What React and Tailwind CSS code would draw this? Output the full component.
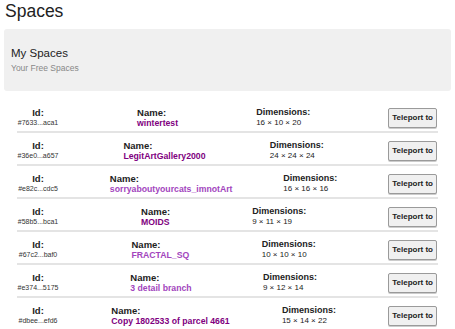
import React from "react";

const rows = [
  { id: "#7633...aca1", name: "wintertest", dims: "16 × 10 × 20", light: false },
  { id: "#36e0...a657", name: "LegitArtGallery2000", dims: "24 × 24 × 24", light: false },
  { id: "#e82c...cdc5", name: "sorryaboutyourcats_imnotArt", dims: "16 × 16 × 16", light: true },
  { id: "#58b5...bca1", name: "MOIDS", dims: "9 × 11 × 19", light: false },
  { id: "#67c2...baf0", name: "FRACTAL_SQ", dims: "10 × 10 × 10", light: true },
  { id: "#e374...5175", name: "3 detail branch", dims: "9 × 12 × 14", light: true },
  { id: "#dbee...efd6", name: "Copy 1802533 of parcel 4661", dims: "15 × 14 × 22", light: false },
];

function Row({ r }) {
  return (
    <div className="flex items-center justify-between pt-[6px] pb-[3px] border-b-2 border-[#e4e4e4]">
      <div className="w-[42px] flex flex-col items-center">
        <div className="text-[9.5px] leading-[11px] font-bold text-[#222]">Id:</div>
        <div className="text-[7px] leading-[10px] text-[#333] whitespace-nowrap">{r.id}</div>
      </div>
      <div className="flex flex-col items-start">
        <div className="text-[9.5px] leading-[11px] font-bold text-[#222]">Name:</div>
        <div
          className={
            "text-[8.7px] leading-[10px] font-bold whitespace-nowrap " +
            (r.light ? "text-[#a245bd]" : "text-[#800080]")
          }
        >
          {r.name}
        </div>
      </div>
      <div className="flex flex-col items-start">
        <div className="text-[9px] leading-[11px] font-bold text-[#222]">Dimensions:</div>
        <div className="text-[8px] leading-[10px] text-[#222] whitespace-nowrap">{r.dims}</div>
      </div>
      <button className="mt-[2px] mr-[1px] h-[20px] px-[3px] text-[8px] font-bold text-[#222] bg-[#f0f0f0] border border-[#9a9a9a] rounded-[2px] shadow-[0_1px_0_#ccc] whitespace-nowrap">
        Teleport to
      </button>
    </div>
  );
}

export default function App() {
  return (
    <div
      className="w-[455px] h-[329px] overflow-hidden bg-white px-[4px]"
      style={{ fontFamily: '"Liberation Sans", Arial, sans-serif' }}
    >
      <h1 className="text-[17.5px] leading-[22px] text-[#222] pl-[1px]">Spaces</h1>
      <div className="mt-[7px] h-[62px] rounded-[3px] bg-[#f0f0f0] px-[7px] pt-[17px]">
        <div className="text-[11.5px] leading-[14px] text-[#222]">My Spaces</div>
        <div className="mt-[3px] text-[8.5px] leading-[10px] text-[#888]">Your Free Spaces</div>
      </div>
      <div className="mx-[13px] mt-[9px]">
        {rows.map((r) => (
          <Row key={r.id} r={r} />
        ))}
      </div>
    </div>
  );
}
